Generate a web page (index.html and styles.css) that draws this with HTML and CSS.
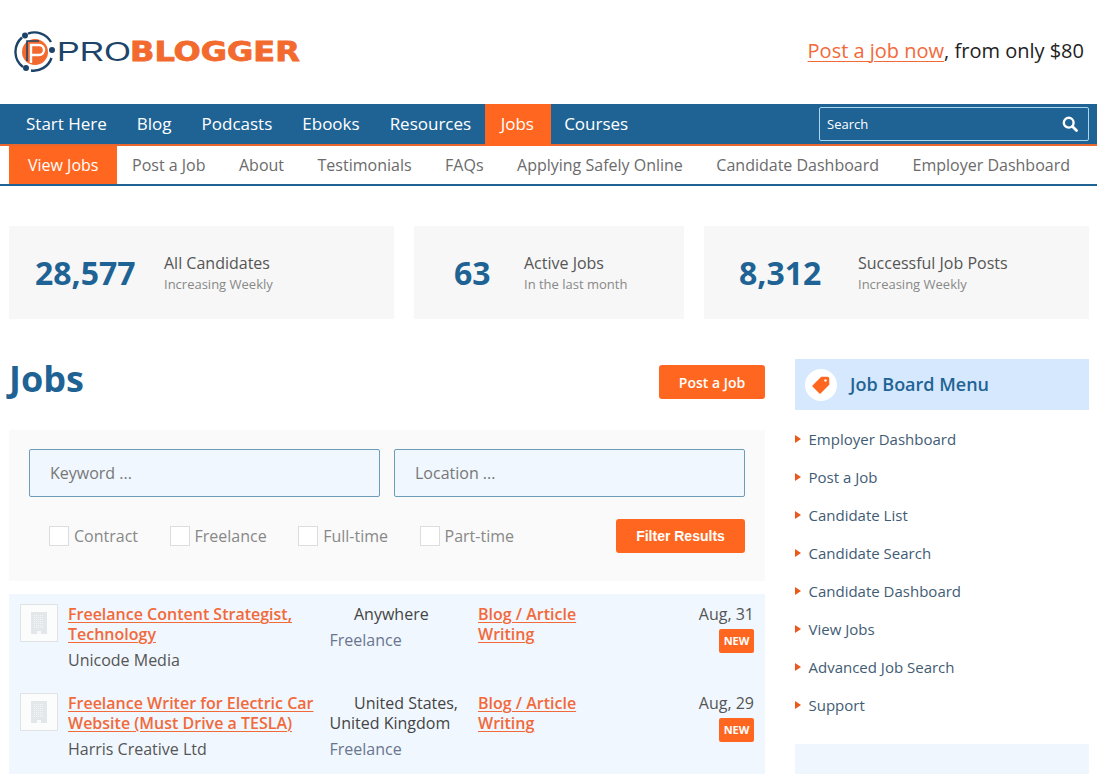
FILE: index.html
```html
<!DOCTYPE html>
<html lang="en">
<head>
<meta charset="utf-8">
<title>ProBlogger Jobs</title>
<link rel="stylesheet" href="styles.css">
</head>
<body>
<div class="page">
<header class="masthead">
  <a class="logo" href="#">
    <svg class="logo-mark" width="42" height="42" viewBox="0 0 42 42">
      <path d="M8 6.500A19 19 0 0 0 9 36" fill="none" stroke="#1d4468" stroke-width="2.400"/>
      <path d="M14 2.600A19 19 0 0 1 37 11" fill="none" stroke="#1d4468" stroke-width="2.400"/>
      <path d="M37.500 27A19 19 0 0 1 17 39.500" fill="none" stroke="#1d4468" stroke-width="2.400"/>
      <circle cx="11" cy="4.500" r="3" fill="#1d4468"/>
      <circle cx="38" cy="19" r="3" fill="#1d4468"/>
      <circle cx="12" cy="37" r="3" fill="#1d4468"/>
      <circle cx="21" cy="21" r="13" fill="#f26a2e"/>
      <path d="M17 32V14h8a5 5 0 0 1 0 10h-8" fill="none" stroke="#fff" stroke-width="2.400"/>
      <path d="M13 30V10h12" fill="none" stroke="#1d4468" stroke-width="1.600"/>
    </svg>
    <span class="logo-pro">PRO</span><span class="logo-blogger">BLOGGER</span>
  </a>
  <p class="promo"><a href="#">Post a job now</a>, from only $80</p>
</header>

<nav class="mainnav">
  <a href="#">Start Here</a>
  <a href="#">Blog</a>
  <a href="#">Podcasts</a>
  <a href="#">Ebooks</a>
  <a href="#">Resources</a>
  <a href="#" class="is-active">Jobs</a>
  <a href="#">Courses</a>
  <div class="search">
    <span>Search</span>
    <svg width="16" height="16" viewBox="0 0 16 16"><circle cx="6.700" cy="6.700" r="4.900" fill="none" stroke="#fff" stroke-width="2.400"/><path d="M10.500 10.500L14.500 14.500" stroke="#fff" stroke-width="2.800" stroke-linecap="round"/></svg>
  </div>
</nav>

<nav class="subnav">
  <a href="#" class="is-active">View Jobs</a>
  <a href="#">Post a Job</a>
  <a href="#">About</a>
  <a href="#">Testimonials</a>
  <a href="#">FAQs</a>
  <a href="#">Applying Safely Online</a>
  <a href="#">Candidate Dashboard</a>
  <a href="#">Employer Dashboard</a>
</nav>

<section class="stats">
  <div class="stat stat-a"><strong class="num-a">28,577</strong><div><h3>All Candidates</h3><p>Increasing Weekly</p></div></div>
  <div class="stat stat-b"><strong class="num-b">63</strong><div><h3>Active Jobs</h3><p>In the last month</p></div></div>
  <div class="stat stat-c"><strong class="num-c">8,312</strong><div><h3>Successful Job Posts</h3><p>Increasing Weekly</p></div></div>
</section>

<div class="columns">
  <main class="content">
    <div class="title-row">
      <h1>Jobs</h1>
      <a class="btn btn-post" href="#">Post a Job</a>
    </div>
    <form class="filters">
      <div class="inputs">
        <div class="field">Keyword ...</div>
        <div class="field">Location ...</div>
      </div>
      <div class="filter-row">
        <label><i></i>Contract</label>
        <label><i></i>Freelance</label>
        <label><i></i>Full-time</label>
        <label><i></i>Part-time</label>
        <a class="btn btn-filter" href="#">Filter Results</a>
      </div>
    </form>
    <div class="jobs">
      <article class="job">
        <div class="thumb"><svg width="16" height="22" viewBox="0 0 16 22"><rect width="16" height="22" fill="#e3e7e9"/><path d="M3 3.500h10M3 5.500h10M3 7.500h10M3 9.500h10M3 11.500h10M3 13.500h10M3 15.500h10" stroke="#f3f5f6" stroke-width="1" stroke-dasharray="1 1"/><rect x="6" y="19" width="4" height="3" fill="#f7f9fa"/></svg></div>
        <div class="job-main"><a href="#">Freelance Content Strategist, Technology</a><p>Unicode Media</p></div>
        <div class="job-loc"><p>Anywhere</p><span>Freelance</span></div>
        <div class="job-cat"><a href="#">Blog / Article Writing</a></div>
        <div class="job-date"><p>Aug, 31</p><b>NEW</b></div>
      </article>
      <article class="job">
        <div class="thumb"><svg width="16" height="22" viewBox="0 0 16 22"><rect width="16" height="22" fill="#e3e7e9"/><path d="M3 3.500h10M3 5.500h10M3 7.500h10M3 9.500h10M3 11.500h10M3 13.500h10M3 15.500h10" stroke="#f3f5f6" stroke-width="1" stroke-dasharray="1 1"/><rect x="6" y="19" width="4" height="3" fill="#f7f9fa"/></svg></div>
        <div class="job-main"><a href="#">Freelance Writer for Electric Car Website (Must Drive a TESLA)</a><p>Harris Creative Ltd</p></div>
        <div class="job-loc"><p>United States, United Kingdom</p><span>Freelance</span></div>
        <div class="job-cat"><a href="#">Blog / Article Writing</a></div>
        <div class="job-date"><p>Aug, 29</p><b>NEW</b></div>
      </article>
    </div>
  </main>

  <aside class="sidebar">
    <h2 class="side-head">
      <span class="side-icon"><svg width="20" height="20" viewBox="0 0 20 20"><path d="M10.500 2.500h6a1 1 0 0 1 1 1v6L9 18 2 11z" fill="#ff6720" stroke="#ff6720" stroke-width="1.500" stroke-linejoin="round"/><circle cx="14.500" cy="5.500" r="1.200" fill="#fff"/></svg></span>
      Job Board Menu
    </h2>
    <ul class="side-menu">
      <li><a href="#">Employer Dashboard</a></li>
      <li><a href="#">Post a Job</a></li>
      <li><a href="#">Candidate List</a></li>
      <li><a href="#">Candidate Search</a></li>
      <li><a href="#">Candidate Dashboard</a></li>
      <li><a href="#">View Jobs</a></li>
      <li><a href="#">Advanced Job Search</a></li>
      <li><a href="#">Support</a></li>
    </ul>
    <div class="side-next"></div>
  </aside>
</div>
</div>
</body>
</html>
```

FILE: styles.css
```css
* { box-sizing: border-box; }
html, body { margin: 0; padding: 0; background: #fff; }
body { font-family: "Open Sans", sans-serif; color: #444; }
h1, h2, h3, p, ul { margin: 0; padding: 0; }
a { text-decoration: none; color: inherit; }
.page { height: 774px; overflow: hidden; }

.masthead { height: 104px; display: flex; align-items: center; justify-content: space-between; padding: 0 13px 0 14px; }
.logo { display: flex; align-items: center; white-space: nowrap; }
.logo-mark { flex: none; margin-right: 1px; }
.logo-pro { font: 400 27px/1 "Liberation Sans", sans-serif; color: #1d4468; display: inline-block; width: 73px; transform: scaleX(1.26); transform-origin: left center; }
.logo-blogger { font: 700 26px/1 "DejaVu Sans", sans-serif; color: #f26a2e; -webkit-text-stroke: 0.8px #f26a2e; display: inline-block; width: 171px; transform: scaleX(1.23); transform-origin: left center; }
.promo { font-size: 20px; color: #222; margin-top: -4px; }
.promo a { color: #f2693a; text-decoration: underline; text-decoration-thickness: 1px; text-underline-offset: 3px; }

.mainnav { height: 42px; background: #1f6395; border-bottom: 2px solid #e9672c; display: flex; align-items: stretch; padding-left: 11px; }
.mainnav a { color: #fff; font-size: 17px; padding: 0 15px 2px; display: flex; align-items: center; height: 40px; }
.mainnav a.is-active { background: #ff6720; padding: 0 16px 4px 16px; margin-left: -1.500px; width: 66.500px; height: 42px; margin-bottom: -2px; }
.mainnav a.is-active + a { padding-left: 13px; }
.search { margin-left: auto; margin-right: 8px; margin-top: 3px; width: 270px; height: 34px; border: 1px solid #a9d6f2; border-radius: 2px; display: flex; align-items: center; justify-content: space-between; padding: 0 10px 0 7px; color: #fff; font-size: 13px; }

.subnav { height: 40px; border-bottom: 2px solid #1f6395; display: flex; padding-left: 9px; }
.subnav a { font-size: 16px; display: flex; align-items: center; margin-right: 33.500px; color: #6b6b6b; white-space: nowrap; }
.subnav a.is-active { background: #ff6720; color: #fff; padding: 0 19px; margin-right: 15px; height: 38px; width: 108px; }

.stats { display: flex; gap: 20px; padding: 40px 8px 0 9px; }
.stat { height: 93px; background: #f7f7f7; display: flex; align-items: center; }
.stat strong { font-size: 32px; font-weight: 700; color: #1f6395; }
.stat h3 { font-size: 16px; font-weight: 400; color: #555; line-height: 22px; }
.stat p { font-size: 13px; color: #888; line-height: 20px; }
.stat-a { width: 385px; padding-left: 26px; }
.stat-b { width: 270px; padding-left: 40px; }
.stat-c { flex: 1; padding-left: 35px; }
.num-a { width: 129px; }
.num-b { width: 70px; }
.num-c { width: 119px; }

.columns { display: flex; padding: 40px 8px 0 9px; gap: 30px; align-items: flex-start; }
.content { width: 756px; flex: none; }
.sidebar { flex: 1; }

.title-row { display: flex; justify-content: space-between; align-items: flex-start; height: 71px; }
h1 { font-size: 36px; line-height: 40px; color: #1f6395; font-weight: 700; }
.btn { background: #ff6720; color: #fff; font: 700 14px "Liberation Sans", sans-serif; border-radius: 3px; display: flex; align-items: center; justify-content: center; }
.title-row .btn-post { width: 106px; height: 34px; margin-top: 6px; font-family: "Open Sans", sans-serif; font-size: 14px; font-weight: 600; }
.btn-filter { width: 129px; height: 34px; margin-left: auto; }

.filters { height: 151px; background: #fafafa; padding: 19px 20px 0; }
.inputs { display: flex; gap: 14px; }
.field { flex: 1; height: 48px; background: #f0f7fe; border: 1px solid #6d9cb8; border-radius: 2px; padding: 0 20px; display: flex; align-items: center; font-size: 16px; color: #777; }
.filter-row { display: flex; align-items: center; margin-top: 22px; height: 34px; padding-left: 20px; gap: 31.500px; }
.filter-row label { display: flex; align-items: center; font-size: 16px; color: #888; }
.filter-row i { width: 20px; height: 20px; background: #fff; border: 1px solid #ddd; margin-right: 5px; }

.jobs { margin-top: 13px; background: #f0f7fe; padding-top: 10px; height: 300px; }
.job { display: flex; height: 89px; padding-left: 11px; font-size: 16px; line-height: 20px; }
.thumb { width: 38px; height: 38px; border: 1px solid #e0e2e4; background: #fbfcfc; display: flex; align-items: center; justify-content: center; flex: none; margin-right: 10px; }
.job-main { width: 250px; flex: none; margin-right: 12px; }
.job a { color: #f2693a; font-weight: 600; text-decoration: underline; text-decoration-thickness: 1px; text-underline-offset: 2px; }
.job-main p { margin-top: 6px; color: #555; }
.job-loc { width: 148px; flex: none; margin-left: -0.500px; margin-right: 0.500px; }
.job-loc p { color: #444; text-indent: 24.500px; }
.job-loc span { display: block; margin-top: 6px; color: #6a7590; }
.job-cat { width: 125px; flex: none; }
.job-date { flex: 1; text-align: right; padding-right: 11px; color: #555; }
.job-date b { display: inline-block; background: #ff6720; color: #fff; font-size: 11px; width: 35px; height: 24px; line-height: 24px; text-align: center; border-radius: 2px; margin-top: 5px; }

.side-head { height: 51px; background: #d5e8fd; display: flex; align-items: center; padding: 0 0 2px 10px; font-size: 18px; font-weight: 600; color: #1f6395; }
.side-icon { width: 32px; height: 32px; border-radius: 50%; background: #fff; display: flex; align-items: center; justify-content: center; margin: 2px 13px 0 0; }
.side-menu { list-style: none; padding-top: 10px; }
.side-menu li { height: 38px; display: flex; align-items: center; font-size: 15px; color: #3f5c74; position: relative; padding-left: 13.500px; }
.side-menu li::before { content: ""; position: absolute; left: 0; top: 15px; border-left: 6px solid #e9591c; border-top: 4px solid transparent; border-bottom: 4px solid transparent; }
.side-next { height: 100px; background: #eff6fe; margin-top: 20px; }
```
